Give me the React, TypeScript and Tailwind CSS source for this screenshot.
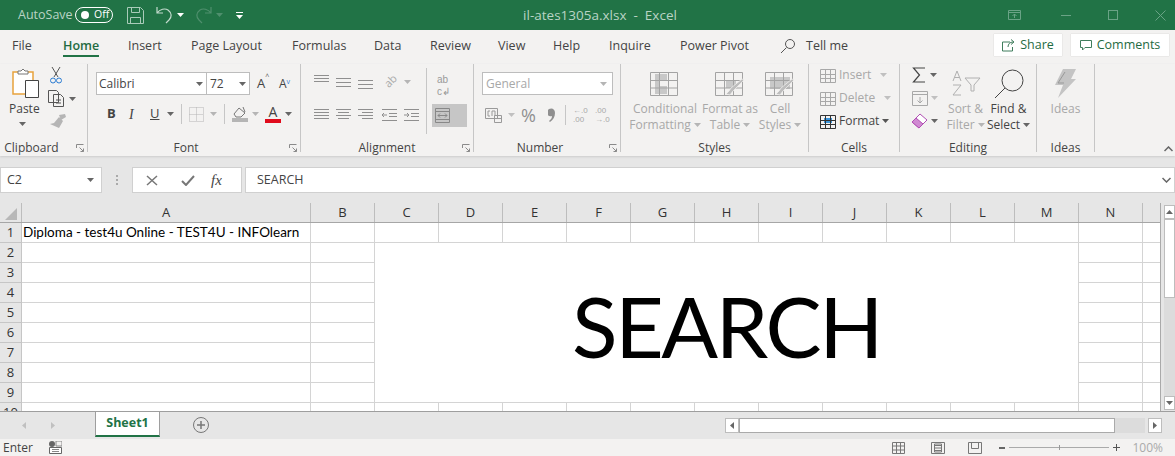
const UI = "font-['Open_Sans','Noto_Sans',sans-serif]";

const tabs = [
  { label: 'File', w: 'w-[51px]' },
  { label: 'Home', w: 'w-[65px]', active: true },
  { label: 'Insert', w: 'w-[63px]' },
  { label: 'Page Layout', w: 'w-[101px]' },
  { label: 'Formulas', w: 'w-[82px]' },
  { label: 'Data', w: 'w-[56px]' },
  { label: 'Review', w: 'w-[68px]' },
  { label: 'View', w: 'w-[55px]' },
  { label: 'Help', w: 'w-[56px]' },
  { label: 'Inquire', w: 'w-[71px]' },
  { label: 'Power Pivot', w: 'w-[100px]' },
];

const columns = ['A', 'B', 'C', 'D', 'E', 'F', 'G', 'H', 'I', 'J', 'K', 'L', 'M', 'N', ''];
const rows = [1, 2, 3, 4, 5, 6, 7, 8, 9, 10];
const colTrack = 'grid-cols-[22px_289px_64px_64px_64px_64px_64px_64px_64px_64px_64px_64px_64px_64px_64px_18px]';

const Caret = ({ c = '#666', className = '' }: { c?: string; className?: string }) => (
  <svg width="7" height="4" viewBox="0 0 7 4" className={className}>
    <path d="M0 0h7L3.5 4z" fill={c} />
  </svg>
);

const Launcher = ({ c = '#8a8a8a' }: { c?: string }) => (
  <svg width="8" height="8" viewBox="0 0 8 8" fill="none" stroke={c}>
    <path d="M.5 4V.5H7.5M7.5 7.5L3.5 3.5M7.5 4.5v3h-3" />
  </svg>
);

const Lines = ({ rows: r, c = '#8f8f8f' }: { rows: [number, number][]; c?: string }) => (
  <svg width="15" height="14" viewBox="0 0 15 14" stroke={c} fill="none">
    {r.map(([a, y], i) => (
      <path key={i} d={`M${a} ${y}.5H${a === 2 ? 13 : 15}`} />
    ))}
  </svg>
);

const Group = ({ w, label, labelPad = '', launcher, children }: { w: string; label: string; labelPad?: string; launcher?: boolean; children: React.ReactNode }) => (
  <div className={`${w} shrink-0 h-[88px] border-r border-[#c6c6c6] flex flex-col`}>
    <div className="h-[79px] flex">{children}</div>
    <div className={`h-[9px] flex items-center relative ${labelPad}`}>
      <span className="flex-1 text-center text-[12px] leading-none text-[#444]">{label}</span>
      {launcher && (
        <span className="absolute right-[3px] top-[1px]">
          <Launcher />
        </span>
      )}
    </div>
  </div>
);

const BigButton = ({ w, lines, caret, icon, dark }: { w: string; lines: string[]; caret?: boolean; icon: React.ReactNode; dark?: boolean }) => (
  <div className={`${w} flex flex-col items-center pt-[2px]`}>
    <div className="h-[35px] flex items-center justify-center">{icon}</div>
    <div className={`text-center text-[12px] leading-[16px] whitespace-nowrap ${dark ? 'text-[#444]' : 'text-[#a8a8a8]'}`}>
      {lines.map((l, i) => (
        <div key={l} className="flex items-center justify-center gap-[3px]">
          {l}
          {caret && i === lines.length - 1 && <Caret c={dark ? '#666' : '#b5b5b5'} />}
        </div>
      ))}
    </div>
  </div>
);

const StyleIcon = ({ kind }: { kind: number }) => (
  <svg width="30" height="24" viewBox="0 0 30 24" fill="none" stroke="#a3a3a3">
    {kind === 0 && <path d="M5 2h12v6H9v6h8v8H5z" fill="#c8c8c8" stroke="none" />}
    {kind === 1 && <path d="M11 8h10v8H11z" fill="#c8c8c8" stroke="none" />}
    {kind === 2 && <path d="M5 5h20v12H5z" fill="#c8c8c8" stroke="none" />}
    <path d="M.5.5h27v23H.5zM.5 8.5h27M.5 16h27M9.5.5v23M18.5.5v23" />
    {kind > 0 && <path d="M29 8L18 19l-3 4-4-1 3-3 2-3 11-9z" fill="#bdbdbd" stroke="#f3f2f1" strokeWidth=".7" />}
  </svg>
);

export default function App() {
  return (
    <div className={`${UI} w-[1175px] h-[456px] overflow-hidden bg-[#e6e6e6] flex flex-col text-[#444]`}>
      {/* title bar */}
      <div className="h-[30px] bg-[#217346] flex items-center text-[13px] text-[#b9d3c5] shrink-0">
        <span className="ml-[18px] w-[57px] whitespace-nowrap text-[12.5px]">AutoSave</span>
        <span className="w-[38px] h-[16px] rounded-full border border-white flex items-center text-[10.5px] text-white">
          <span className="ml-[5px] mr-[5px] w-[8px] h-[8px] rounded-full bg-white" />
          Off
        </span>
        <svg className="ml-[14px]" width="17" height="17" viewBox="0 0 17 17" fill="none" stroke="#a9cbb9">
          <path d="M.5.5h13l3 3v13H.5zM4.5.5v5h8v-5M3.5 16.5v-6h10v6" />
        </svg>
        <svg className="ml-[12px]" width="17" height="18" viewBox="0 0 17 18" fill="none" stroke="#c3dacd" strokeWidth="1.2">
          <path d="M1 1v6h6M1 7c3-4 8-5 11-3 4 3 4 7 1 10l-3 3" />
        </svg>
        <Caret c="#fff" className="ml-[4px]" />
        <svg className="ml-[11px]" width="17" height="18" viewBox="0 0 17 18" fill="none" stroke="#4f8f6d" strokeWidth="1.2">
          <path d="M16 1v6h-6M16 7c-3-4-8-5-11-3-4 3-4 7-1 10l3 3" />
        </svg>
        <Caret c="#4f8f6d" className="ml-[4px]" />
        <svg className="ml-[13px]" width="7" height="7" viewBox="0 0 7 7">
          <path d="M0 0h7v1H0zM0 3h7L3.5 7z" fill="#fff" />
        </svg>
        <div className="flex-1 text-center text-[13.5px] pr-[51px] whitespace-pre">il-ates1305a.xlsx  -  Excel</div>
        <svg width="14" height="10" viewBox="0 0 14 10" fill="none" stroke="#6aa386">
          <path d="M.5.5h12v9H.5zM.5 2.5h12M6.5 8V4M4.5 6l2-2 2 2" />
        </svg>
        <span className="ml-[39px] w-[10px] h-px bg-[#6aa386]" />
        <span className="ml-[37px] w-[10px] h-[10px] border border-[#6aa386]" />
        <svg className="ml-[37px] mr-[9px]" width="11" height="11" viewBox="0 0 11 11" stroke="#6aa386">
          <path d="M.5.5l10 10M10.5.5l-10 10" />
        </svg>
      </div>

      {/* ribbon tabs */}
      <div className="h-[34px] bg-[#f3f2f1] flex shrink-0 pl-[12px] text-[12.5px] text-[#444]">
        {tabs.map(t => (
          <div key={t.label} className={`${t.w} h-full pt-[7px] whitespace-nowrap`}>
            <span className={`inline-block h-[20px] leading-[17px] ${t.active ? 'border-b-[2px] border-[#217346] text-[#1f6b42] font-semibold' : ''}`}>
              {t.label}
            </span>
          </div>
        ))}
        <svg className="mt-[8px]" width="16" height="16" viewBox="0 0 16 16" fill="none" stroke="#555">
          <circle cx="10" cy="6" r="4.5" />
          <path d="M6.5 9.5L1 15" />
        </svg>
        <span className="ml-[10px] pt-[7px] leading-[17px]">Tell me</span>
        <div className="ml-auto flex gap-[9px] pr-[6px] pt-[4px]">
          <span className="w-[68px] h-[22px] bg-white flex items-center justify-center gap-[5px] text-[#1f6b42] font-medium shadow-[0_0_1px_#bbb]">
            <svg width="13" height="13" viewBox="0 0 13 13" fill="none" stroke="#3f7d5c">
              <path d="M8 3H.5v9h10V8M6 8c0-3 2-5 5-5M9 .5l3 2.5-3 2.5" />
            </svg>
            Share
          </span>
          <span className="w-[98px] h-[22px] bg-white flex items-center justify-center gap-[5px] text-[#1f6b42] font-medium shadow-[0_0_1px_#bbb]">
            <svg width="12" height="12" viewBox="0 0 12 12" fill="none" stroke="#3f7d5c">
              <path d="M.5 1.5h11v7H5L2.5 11V8.5h-2z" />
            </svg>
            Comments
          </span>
        </div>
      </div>

      {/* ribbon */}
      <div className="h-[92px] bg-[#f3f2f1] flex shrink-0 shadow-[0_1px_2px_#ccc] text-[12px]">
        <Group w="w-[88px]" label="Clipboard" labelPad="pr-[24px]" launcher>
          <div className="pl-[9px] w-[50px]">
            <svg className="ml-[3px] mt-[4px]" width="28" height="30" viewBox="0 0 28 30" fill="none">
              <path d="M1 4h20v22H1z" stroke="#e8a33d" fill="#fff" strokeWidth="1.5" />
              <path d="M6 6V3h3l2-2 2 2h3v3z" fill="#fff" stroke="#777" />
              <path d="M13.5 12.5h13v17h-13z" fill="#fff" stroke="#444" />
            </svg>
            <div className="mt-[3px] leading-[16px] text-[12px]">Paste</div>
            <Caret className="ml-[10px] mt-[5px]" />
          </div>
          <div className="flex flex-col pt-[3px]">
            <svg width="12" height="17" viewBox="0 0 12 17" fill="none" stroke="#555">
              <path d="M2 0l6 10M10 0L4 10" />
              <circle cx="3" cy="13.5" r="2.5" stroke="#2b7cd3" />
              <circle cx="9" cy="13.5" r="2.5" stroke="#2b7cd3" />
            </svg>
            <div className="flex items-center mt-[6px] -ml-[2px] gap-[5px]">
              <svg width="16" height="17" viewBox="0 0 16 17" fill="none" stroke="#555">
                <path d="M.5.5h8l2 2v10h-10zM5.5 4.5h7l3 3v9h-10zM8 10h5M8 13h5" fill="#f3f2f1" />
              </svg>
              <Caret />
            </div>
            <svg className="mt-[7px]" width="16" height="15" viewBox="0 0 16 15">
              <path d="M9 1l6-1 1 3-5 3zM9 3l4 4-4 7-9-4 4-1z" fill="#b5b5b5" />
            </svg>
          </div>
        </Group>

        <Group w="w-[213px]" label="Font" labelPad="pr-[16px]" launcher>
          <div className="pl-[8px] pt-[8px] flex flex-col">
            <div className="flex items-center h-[23px]">
              <div className="w-[111px] h-full bg-white border border-[#bdbdbd] flex items-center justify-between pl-[2px] pr-[3px] text-[12px]">
                Calibri <Caret />
              </div>
              <div className="w-[43px] h-full bg-white border border-l-0 border-[#bdbdbd] flex items-center justify-between pl-[3px] pr-[3px] text-[12px]">
                72 <Caret />
              </div>
              <span className="ml-[7px] text-[13px] w-[22px] whitespace-nowrap">A<sup className="text-[7px] align-super text-[#555]">^</sup></span>
              <span className="text-[12px] whitespace-nowrap">A<sup className="text-[7px] text-[#2b7cd3]">v</sup></span>
            </div>
            <div className="flex items-center h-[20px] mt-[9px] text-[13px] pl-[11px]">
              <span className="w-[22px] font-bold">B</span>
              <span className="w-[21px] italic font-['Liberation_Serif',serif] text-[14px]">I</span>
              <span className="w-[17px] underline">U</span>
              <Caret />
              <span className="ml-[7px] w-px h-[20px] bg-[#c6c6c6]" />
              <svg className="ml-[7px]" width="15" height="15" viewBox="0 0 15 15" fill="none" stroke="#b5b5b5" strokeDasharray="1 1">
                <path d="M.5.5h14v14H.5zM7.5.5v14M.5 7.5h14" />
              </svg>
              <Caret c="#b5b5b5" className="ml-[6px]" />
              <span className="ml-[7px] w-px h-[20px] bg-[#c6c6c6]" />
              <svg className="ml-[7px]" width="16" height="16" viewBox="0 0 16 16">
                <path d="M2 8l5-6 6 5-4 4H4zM11 1l2 5" fill="none" stroke="#777" />
                <rect y="12" width="16" height="4" fill="#b5b5b5" />
              </svg>
              <Caret c="#b5b5b5" className="ml-[4px]" />
              <span className="ml-[6px] flex flex-col items-center w-[16px] text-[14px] leading-[12px]">
                A<span className="mt-[1px] w-[16px] h-[4px] bg-[#e00b1c]" />
              </span>
              <Caret className="ml-[4px]" />
            </div>
          </div>
        </Group>

        <Group w="w-[173px]" label="Alignment" launcher>
          <div className="w-[126px] h-[66px] border-r border-[#c6c6c6] pl-[13px] pt-[9px] mt-[4px]">
            <div className="flex gap-[7px] h-[16px] items-start -mt-[3px]">
              <Lines rows={[[0, 1], [0, 4], [0, 7]]} />
              <span className="mt-[3px]"><Lines rows={[[0, 1], [0, 5], [0, 9]]} /></span>
              <span className="mt-[5px]"><Lines rows={[[0, 1], [0, 5], [0, 9]]} /></span>
              <span className="ml-[2px] w-[17px] -rotate-45 text-[11px] leading-[14px] text-[#aaa] text-center">ab</span>
              <Caret c="#b5b5b5" className="mt-[6px] -ml-[2px]" />
            </div>
            <div className="flex gap-[7px] mt-[18px]">
              <Lines rows={[[0, 1], [0, 4], [0, 7], [0, 10]]} />
              <Lines rows={[[0, 1], [2, 4], [0, 7], [2, 10]]} />
              <Lines rows={[[0, 1], [4, 4], [0, 7], [4, 10]]} />
              <svg className="ml-[2px]" width="15" height="14" viewBox="0 0 15 14" fill="none" stroke="#8f8f8f">
                <path d="M0 1.5h15M7 5.5h8M7 8.5h8M0 12.5h15M5 7H0M2 5L0 7l2 2" />
              </svg>
              <svg width="15" height="14" viewBox="0 0 15 14" fill="none" stroke="#8f8f8f">
                <path d="M0 1.5h15M7 5.5h8M7 8.5h8M0 12.5h15M0 7h5M3 5l2 2-2 2" />
              </svg>
            </div>
          </div>
          <div className="pl-[5px] pt-[10px]">
            <div className="ml-[5px] w-[18px] font-['Liberation_Sans',sans-serif] text-[10px] leading-[11.5px] text-[#9a9a9a] h-[22px]">ab<br />c↲</div>
            <div className="mt-[8px] w-[35px] h-[23px] bg-[#c6c6c6] flex items-center pl-[3px]">
              <svg width="15" height="15" viewBox="0 0 15 15" fill="none" stroke="#888">
                <path d="M.5.5h14v14H.5zM.5 3.5h14M.5 11.5h14M3 7.5h9M5 5.5l-2 2 2 2M10 5.5l2 2-2 2" />
              </svg>
            </div>
          </div>
        </Group>

        <Group w="w-[147px]" label="Number" labelPad="pr-[14px]" launcher>
          <div className="pl-[8px] pt-[8px]">
            <div className="w-[131px] h-[23px] bg-white border border-[#bdbdbd] flex items-center justify-between px-[3px] pr-[5px] text-[#a8a8a8]">
              General <Caret c="#b5b5b5" />
            </div>
            <div className="flex items-center mt-[10px] h-[20px] pl-[3px]">
              <svg width="17" height="15" viewBox="0 0 17 15" fill="none" stroke="#9a9a9a">
                <path d="M.5.5h12v10H.5zM9.5 7.5h7v7h-7zM9.5 10.5h7M3 3h2M3 3v5h2M7 8V3h3v5" />
              </svg>
              <Caret c="#c0c0c0" className="ml-[6px]" />
              <span className="ml-[6px] text-[18px] leading-[20px] text-[#8f8f8f] w-[27px]">%</span>
              <svg className="mr-[10px]" width="7" height="14" viewBox="0 0 7 14">
                <path d="M1 1c3-1.5 6 0 6 4 0 4-2 7-5 9l-1-1c2-1.5 3-3 3-5-3 1-5-1-5-3 0-2 1-3 2-4z" fill="#8f8f8f" />
              </svg>
              <span className="w-px h-[20px] bg-[#c6c6c6]" />
              <span className="ml-[7px] font-['Liberation_Sans',sans-serif] text-[8px] leading-[9.5px] text-[#a8a8a8] w-[22px] whitespace-nowrap">←.0<br />.00</span>
              <span className="font-['Liberation_Sans',sans-serif] text-[8px] leading-[9.5px] text-[#a8a8a8] whitespace-nowrap">.00<br />→.0</span>
            </div>
          </div>
        </Group>

        <Group w="w-[188px]" label="Styles">
          <div className="flex pl-[10px]">
            <BigButton w="w-[68px]" lines={['Conditional', 'Formatting']} caret icon={<StyleIcon kind={0} />} />
            <BigButton w="w-[62px]" lines={['Format as', 'Table']} caret icon={<StyleIcon kind={1} />} />
            <BigButton w="w-[38px]" lines={['Cell', 'Styles']} caret icon={<StyleIcon kind={2} />} />
          </div>
        </Group>

        <Group w="w-[91px]" label="Cells">
          <div className="pl-[11px] pt-[3px] flex flex-col gap-[7px]">
            {[
              { t: 'Insert', w: 'w-[38px]', dark: false },
              { t: 'Delete', w: 'w-[42px]', dark: false },
              { t: 'Format', w: 'w-[40px]', dark: true },
            ].map(r => (
              <div key={r.t} className={`flex items-center h-[16px] gap-[3px] ${r.dark ? 'text-[#444]' : 'text-[#a8a8a8]'}`}>
                <svg width="16" height="16" viewBox="0 0 16 16" fill="none" stroke={r.dark ? '#333' : '#a8a8a8'}>
                  {r.dark && <rect x="4" y="5" width="8" height="5" fill="#3a96dd" stroke="none" />}
                  <path d="M.5 2.5h15v13H.5zM5.5 2.5v13M10.5 2.5v13M.5 7.5h15M.5 11.5h15" />
                </svg>
                <span className={r.w}>{r.t}</span>
                <Caret c={r.dark ? '#555' : '#c0c0c0'} />
              </div>
            ))}
          </div>
        </Group>

        <Group w="w-[137px]" label="Editing">
          <div className="pl-[12px] pt-[3px] flex flex-col gap-[7px] w-[44px]">
            <div className="flex items-center h-[16px] gap-[3px]">
              <svg width="15" height="16" viewBox="0 0 15 16" fill="none" stroke="#444" strokeWidth="1.2">
                <path d="M13 1H1.5l6 7-6 7H13" />
              </svg>
              <Caret />
            </div>
            <div className="flex items-center h-[16px] gap-[3px]">
              <svg width="16" height="15" viewBox="0 0 16 15" fill="none" stroke="#a8a8a8">
                <path d="M.5.5h15v14H.5zM.5 3.5h15M8 6v6M5.5 9.5L8 12l2.5-2.5" />
              </svg>
              <Caret c="#c0c0c0" />
            </div>
            <div className="flex items-center h-[16px] gap-[3px]">
              <svg width="16" height="16" viewBox="0 0 16 16">
                <path d="M0 9l8-8 7 6-8 8z" fill="#fff" stroke="#b14fb4" />
                <path d="M0 9l4-4 7 6-4 4z" fill="#d08ad2" stroke="#b14fb4" />
              </svg>
              <Caret />
            </div>
          </div>
          <BigButton w="w-[43px]" lines={['Sort &', 'Filter']} caret icon={
            <svg width="30" height="27" viewBox="0 0 30 27" fill="none" stroke="#b0b0b0">
              <path d="M2 11L6 1l4 10M3.5 7.5h5M2 15h8l-8 10h8M14 8h15l-6 7v6h-3v-6z" />
            </svg>
          } />
          <BigButton w="w-[43px]" dark lines={['Find &', 'Select']} caret icon={
            <svg width="30" height="30" viewBox="0 0 30 30" fill="none" stroke="#444">
              <circle cx="18.5" cy="11.5" r="10.5" />
              <path d="M11 19L1 29" />
            </svg>
          } />
        </Group>

        <Group w="w-[58px]" label="Ideas">
          <BigButton w="w-full" lines={['Ideas']} icon={
            <svg width="22" height="29" viewBox="0 0 22 29">
              <path d="M8 0h13l-5 10h5L3 29l5-13H0z" fill="#c4c4c4" />
              <path d="M10 3L3 14h6" fill="none" stroke="#999" />
            </svg>
          } />
        </Group>

        <div className="flex-1 flex items-end justify-end pr-[2px] pb-[4px]">
          <svg width="9" height="6" viewBox="0 0 9 6" fill="none" stroke="#666" strokeWidth="1.5">
            <path d="M.5 5L4.5 1l4 4" />
          </svg>
        </div>
      </div>

      {/* formula bar */}
      <div className="h-[26px] mt-[11px] flex shrink-0 text-[#444]">
        <div className="w-[102px] h-full bg-white border border-[#d0d0d0] flex items-center justify-between pl-[6px] pr-[7px] text-[12.5px]">
          C2 <Caret />
        </div>
        <div className="w-[30px] flex items-center justify-center">
          <span className="w-[2px] h-[10px] border-l-2 border-dotted border-[#aaa]" />
        </div>
        <div className="w-[110px] h-full bg-white border border-[#d0d0d0] flex items-center pl-[13px]">
          <svg width="12" height="11" viewBox="0 0 12 11" stroke="#777" strokeWidth="1.5">
            <path d="M1 1l10 9M11 1L1 10" />
          </svg>
          <svg className="ml-[23px]" width="14" height="11" viewBox="0 0 14 11" fill="none" stroke="#777" strokeWidth="2">
            <path d="M1 6l4 4 8-9" />
          </svg>
          <span className="ml-[16px] italic font-['Liberation_Serif',serif] text-[15px]">fx</span>
        </div>
        <div className="ml-[3px] flex-1 h-full bg-white border border-[#d0d0d0] flex items-center justify-between pl-[11px] pr-[3px] text-[12.5px]">
          SEARCH
          <svg width="9" height="6" viewBox="0 0 9 6" fill="none" stroke="#666" strokeWidth="1.5">
            <path d="M.5 1l4 4 4-4" />
          </svg>
        </div>
      </div>

      {/* sheet */}
      <div className="mt-[10px] h-[208px] flex shrink-0">
        <div className="w-[1161px] h-full overflow-hidden border-r border-[#aaa]">
          <div className={`grid ${colTrack} h-[20px] border-b border-[#a6a6a6] text-[13px] text-[#333]`}>
            <div className="flex items-end justify-end pr-[4px] pb-[2px] border-r border-[#bdbdbd]">
              <svg width="12" height="12" viewBox="0 0 12 12"><path d="M12 0v12H0z" fill="#b8b8b8" /></svg>
            </div>
            {columns.map(c => (
              <div key={c} className="flex items-center justify-center border-r border-[#bdbdbd] leading-none">{c}</div>
            ))}
          </div>
          <div className={`grid ${colTrack} auto-rows-[20px] bg-white font-['Lato',sans-serif] text-[13.5px] text-black`}>
            <div className="col-start-4 col-end-[15] row-start-2 row-end-[10] bg-white border-r border-b border-[#d4d4d4] flex items-center justify-center pt-[6px]">
              <span className="font-['Lato',sans-serif] text-[84px] tracking-[-2.4px] leading-none">SEARCH</span>
            </div>
            {rows.map(r => (
              <div key={r} className="contents">
                <div className={`${UI} bg-[#e6e6e6] border-b border-r border-[#c6c6c6] flex items-center justify-center text-[13px] text-[#333]`}>{r}</div>
                {columns.map((c, i) => {
                  if (r >= 2 && r <= 9 && i >= 2 && i <= 12) return null;
                  return (
                    <div key={c} className="border-r border-b border-[#d4d4d4] flex items-center pl-[1px] whitespace-nowrap overflow-hidden">
                      {r === 1 && c === 'A' ? 'Diploma - test4u Online - TEST4U - INFOlearn' : ''}
                    </div>
                  );
                })}
              </div>
            ))}
          </div>
        </div>
        {/* vertical scrollbar */}
        <div className="ml-[3px] flex-1 flex flex-col pt-[2px] pb-[1px]">
          <div className="h-[14px] bg-white border border-[#bdbdbd] flex items-center justify-center">
            <svg width="7" height="4" viewBox="0 0 7 4"><path d="M0 4h7L3.5 0z" fill="#666" /></svg>
          </div>
          <div className="h-[79px] bg-white border border-[#bdbdbd]" />
          <div className="flex-1 bg-[#dcdcdc]" />
          <div className="h-[14px] bg-white border border-[#bdbdbd] flex items-center justify-center">
            <Caret />
          </div>
        </div>
      </div>

      {/* sheet tabs */}
      <div className="h-[28px] border-t border-[#9e9e9e] flex items-start shrink-0">
        <div className="w-[95px] h-full flex items-center pl-[22px] gap-[25px]">
          <svg width="4" height="7" viewBox="0 0 4 7"><path d="M4 0v7L0 3.5z" fill="#c0c0c0" /></svg>
          <svg width="4" height="7" viewBox="0 0 4 7"><path d="M0 0v7l4-3.5z" fill="#c0c0c0" /></svg>
        </div>
        <div className="w-[65px] h-[25px] bg-white border-x border-[#9e9e9e] border-b-2 border-b-[#217346] flex items-center justify-center text-[12.5px] font-bold text-[#217346]">
          Sheet1
        </div>
        <svg className="ml-[33px] mt-[5px]" width="16" height="16" viewBox="0 0 16 16" fill="none" stroke="#777">
          <circle cx="8" cy="8" r="7.5" />
          <path d="M8 4v8M4 8h8" strokeWidth="1.5" />
        </svg>
        <div className="ml-auto mr-[13px] mt-[6px] flex h-[15px]">
          <div className="w-[14px] bg-white border border-[#bdbdbd] flex items-center justify-center">
            <svg width="4" height="7" viewBox="0 0 4 7"><path d="M4 0v7L0 3.5z" fill="#666" /></svg>
          </div>
          <div className="w-[376px] bg-white border border-[#aaa]" />
          <div className="w-[30px] bg-[#dcdcdc]" />
          <div className="ml-[3px] w-[14px] bg-white border border-[#bdbdbd] flex items-center justify-center">
            <svg width="4" height="7" viewBox="0 0 4 7"><path d="M0 0v7l4-3.5z" fill="#666" /></svg>
          </div>
        </div>
      </div>

      {/* status bar */}
      <div className="h-[17px] bg-[#f3f2f1] flex items-center text-[12px] text-[#444] shrink-0">
        <span className="ml-[3px] w-[46px]">Enter</span>
        <svg width="13" height="13" viewBox="0 0 13 13">
          <circle cx="3" cy="3" r="3" fill="#666" />
          <path d="M.5 6.5h12v6H.5z" fill="#fff" stroke="#666" />
          <path d="M3 8.5h7M3 10.5h7M7 0h6v5H7z" stroke="#888" fill="none" />
        </svg>
        <svg className="ml-auto" width="13" height="12" viewBox="0 0 13 12" fill="none" stroke="#777">
          <path d="M.5.5h12v11H.5zM4.5.5v11M8.5.5v11M.5 4h12M.5 8h12" />
        </svg>
        <svg className="ml-[26px]" width="14" height="12" viewBox="0 0 14 12" fill="none" stroke="#777">
          <path d="M.5.5h13v11H.5zM4 3.5h6M4 6h6M4 8.5h6M3.5 2v8h7V2z" />
        </svg>
        <svg className="ml-[23px]" width="14" height="12" viewBox="0 0 14 12" fill="none" stroke="#777">
          <path d="M.5.5h13v11H.5zM3.5.5v6h7v-6" />
        </svg>
        <span className="ml-[17px] w-[6px] h-[2px] bg-[#666]" />
        <span className="ml-[4px] w-[100px] h-px bg-[#aaa] flex justify-center items-center">
          <span className="w-px h-[5px] bg-[#999]" />
        </span>
        <svg className="ml-[4px]" width="7" height="7" viewBox="0 0 7 7"><path d="M0 3h3V0h1v3h3v1H4v3H3V4H0z" fill="#555" /></svg>
        <span className="ml-[12px] mr-[12px] text-[#aaa]">100%</span>
      </div>
    </div>
  );
}
